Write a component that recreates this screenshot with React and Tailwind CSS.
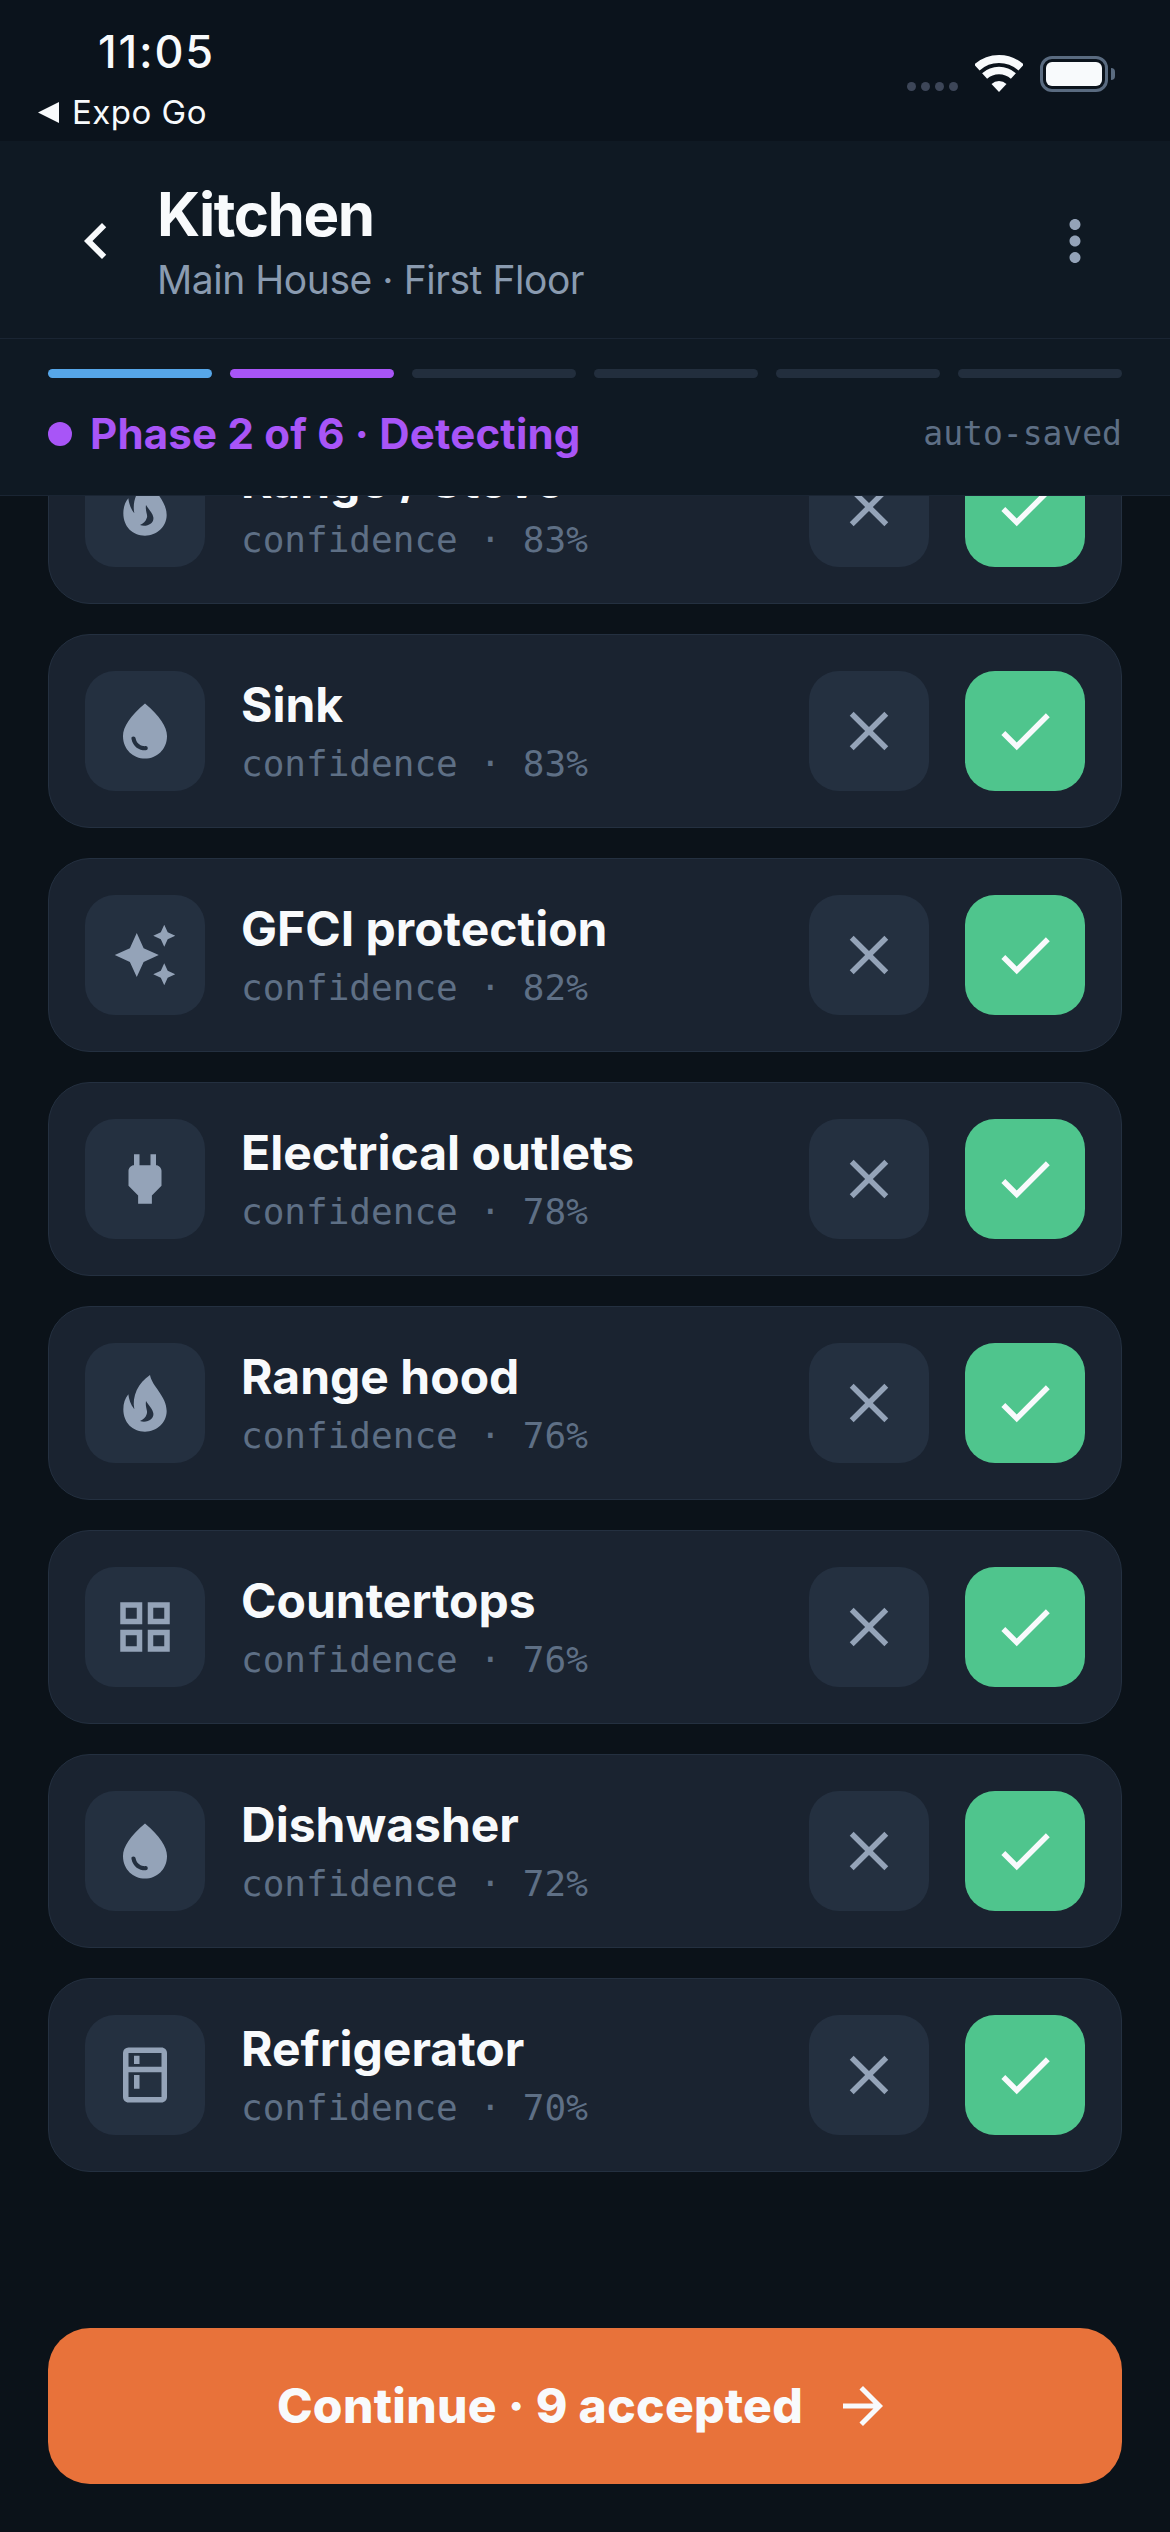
import React from "react";
import {
  MdChevronLeft,
  MdMoreVert,
  MdWaterDrop,
  MdAutoAwesome,
  MdPower,
  MdOutlineGridView,
  MdOutlineKitchen,
  MdClose,
  MdCheck,
  MdArrowForward,
} from "react-icons/md";

function Flame({ color }) {
  return (
    <svg width="60" height="75" viewBox="0 0 180 225" className="block">
      <path
        fill={color}
        fillRule="evenodd"
        d="M105 27C110 60 155 90 155 135C155 170 125 197 90 197C52 197 25 170 25 130C25 112 30 97 40 85C42 100 46 115 58 130C50 90 70 50 105 27ZM93 105C90 125 100 135 95 145C92 155 85 160 75 165C95 172 118 160 115 142C113 128 100 118 93 105Z"
      />
    </svg>
  );
}

const items = [
  { name: "Range / Stove", pct: 83, Icon: Flame },
  { name: "Sink", pct: 83, Icon: MdWaterDrop },
  { name: "GFCI protection", pct: 82, Icon: MdAutoAwesome },
  { name: "Electrical outlets", pct: 78, Icon: MdPower },
  { name: "Range hood", pct: 76, Icon: Flame },
  { name: "Countertops", pct: 76, Icon: MdOutlineGridView },
  { name: "Dishwasher", pct: 72, Icon: MdWaterDrop },
  { name: "Refrigerator", pct: 70, Icon: MdOutlineKitchen },
];

function Wifi() {
  return (
    <svg width="48" height="37" viewBox="0 0 48 37" fill="none">
      <path d="M1.9 12.5A33 33 0 0 1 46.1 12.5" stroke="#f8fafc" strokeWidth="8" />
      <path d="M9.6 21A21.5 21.5 0 0 1 38.4 21" stroke="#f8fafc" strokeWidth="7.5" />
      <path d="M24 37L16.5 29A11 11 0 0 1 31.5 29Z" fill="#f8fafc" />
    </svg>
  );
}

function StatusBar() {
  return (
    <div className="h-[141px] shrink-0 bg-[#0b131c] flex justify-between">
      <div className="flex flex-col">
        <div className="pl-[98px] pt-[25px] text-[45px] leading-[54px] font-medium tracking-[1.8px] text-[#f8fafc]">11:05</div>
        <div className="pl-[38px] flex items-center gap-[13px] mt-[13px]">
          <svg width="21" height="21" viewBox="0 0 21 21">
            <path d="M21 0V21L0 10.5Z" fill="#f8fafc" />
          </svg>
          <span className="text-[33px] leading-[40px] font-normal tracking-[0.5px] text-[#f8fafc]">Expo Go</span>
        </div>
      </div>
      <div className="flex items-start pt-[55px] pr-[55px]">
        <div className="flex gap-[5px] mt-[27px] mr-[17px]">
          <span className="w-[9px] h-[9px] rounded-full bg-[#3d4658]" />
          <span className="w-[9px] h-[9px] rounded-full bg-[#3d4658]" />
          <span className="w-[9px] h-[9px] rounded-full bg-[#3d4658]" />
          <span className="w-[9px] h-[9px] rounded-full bg-[#3d4658]" />
        </div>
        <Wifi />
        <div className="ml-[17px] mt-[1px] w-[68px] h-[36px] rounded-[12px] border-[3px] border-[#5a6b80] p-[3px]">
          <div className="w-full h-full rounded-[6px] bg-[#f8fafc]" />
        </div>
        <div className="ml-[3px] mt-[13px] w-[4px] h-[12px] rounded-r-[4px] bg-[#5a6b80]" />
      </div>
    </div>
  );
}

function Header() {
  return (
    <div className="h-[198px] shrink-0 bg-[#0f1923] border-b border-[#1a2533] flex items-center pl-[60px] pr-[60px]">
      <MdChevronLeft size={72} color="#f8fafc" className="shrink-0 mt-[3px]" />
      <div className="ml-[25px] flex-1 mt-[3px]">
        <div className="text-[60px] leading-[78px] font-bold tracking-[-1.5px] text-[#f8fafc]">Kitchen</div>
        <div className="text-[39px] leading-[54px] font-normal tracking-[-0.45px] text-[#8a9bb0]">Main House · First Floor</div>
      </div>
      <MdMoreVert size={66} color="#94a3b8" className="shrink-0 mt-[3px] ml-[-2px] mr-[2px]" />
    </div>
  );
}

function Progress() {
  const bars = ["bg-[#56a6e8]", "bg-[#a855f7]", "bg-[#222e3d]", "bg-[#222e3d]", "bg-[#222e3d]", "bg-[#222e3d]"];
  return (
    <div className="h-[157px] shrink-0 bg-[#0f1923] border-b border-[#1a2533] px-[48px] pt-[30px] relative z-10">
      <div className="flex gap-[18px]">
        {bars.map((b, i) => (
          <div key={i} className={`flex-1 h-[9px] rounded-[5px] ${b}`} />
        ))}
      </div>
      <div className="mt-[29px] flex items-center justify-between">
        <div className="flex items-center gap-[18px]">
          <span className="w-[24px] h-[24px] rounded-full bg-[#a855f7]" />
          <span className="text-[42px] leading-[54px] font-bold tracking-[0.2px] text-[#a855f7]">Phase 2 of 6 · Detecting</span>
        </div>
        <span className="font-['DejaVu_Sans_Mono',monospace] text-[33px] leading-[54px] text-[#5e6f85]">auto-saved</span>
      </div>
    </div>
  );
}

function Row({ name, pct, Icon }) {
  return (
    <div className="h-[194px] shrink-0 rounded-[42px] bg-[#1a2330] border border-[#243040] px-[36px] flex items-center">
      <div className="w-[120px] h-[120px] rounded-[30px] bg-[#243040] flex items-center justify-center shrink-0">
        <Icon size={66} color="#94a3b8" />
      </div>
      <div className="ml-[36px] mt-[1px] flex-1 min-w-0">
        <div className="text-[48px] leading-[60px] font-bold text-[#f8fafc]">{name}</div>
        <div className="mt-[5px] font-['DejaVu_Sans_Mono',monospace] text-[36px] leading-[48px] text-[#5e6f85]">confidence · {pct}%</div>
      </div>
      <div className="flex gap-[36px] shrink-0">
        <div className="w-[120px] h-[120px] rounded-[30px] bg-[#243040] flex items-center justify-center">
          <MdClose size={66} color="#94a3b8" />
        </div>
        <div className="w-[120px] h-[120px] rounded-[30px] bg-[#4fc58d] flex items-center justify-center">
          <MdCheck size={66} color="#f8fafc" />
        </div>
      </div>
    </div>
  );
}

export default function App() {
  return (
    <div className="w-[1170px] h-[2532px] overflow-hidden bg-[#0b1219] flex flex-col font-['Inter',sans-serif]">
      <StatusBar />
      <Header />
      <Progress />
      <div className="flex-1 min-h-0 overflow-hidden px-[48px]">
        <div className="-mt-[86px] flex flex-col gap-[30px]">
          {items.map((it) => (
            <Row key={it.name} {...it} />
          ))}
        </div>
      </div>
      <div className="shrink-0 px-[48px] pb-[48px]">
        <div className="h-[156px] rounded-[42px] bg-[#e8723a] flex items-center justify-center gap-[30px]">
          <span className="text-[48px] leading-[60px] font-extrabold tracking-[0.3px] text-[#f8fafc]">Continue · 9 accepted</span>
          <MdArrowForward size={60} color="#f8fafc" />
        </div>
      </div>
    </div>
  );
}
